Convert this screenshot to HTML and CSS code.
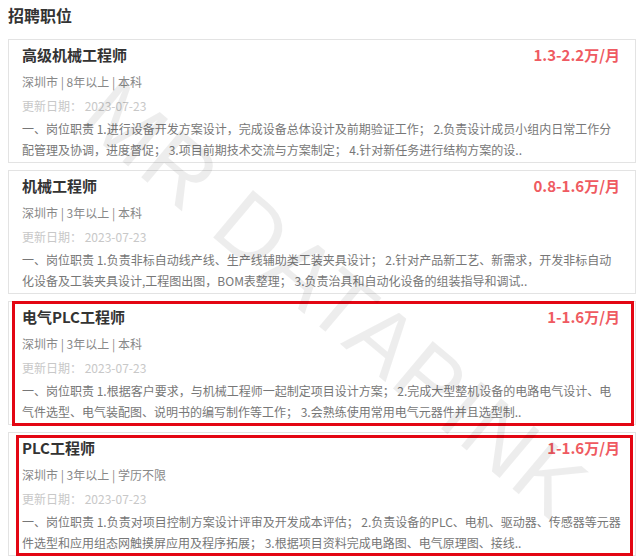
FILE: index.html
```html
<!DOCTYPE html>
<html lang="zh-CN">

<head>
    <meta charset="UTF-8">
    <meta name="viewport" content="width=device-width, initial-scale=1.0">
    <title>招聘职位</title>
    <link rel="stylesheet" href="styles.css">
</head>

<body>
    <div class="jobs">
        <h2 class="jobs-title">招聘职位</h2>

        <div class="job">
            <div class="job-head">
                <span class="job-name">高级机械工程师</span>
                <span class="job-salary">1.3-2.2万/月</span>
            </div>
            <div class="job-meta">深圳市 | 8年以上 | 本科</div>
            <div class="job-date">更新日期： 2023-07-23</div>
            <p class="job-desc">一、岗位职责 1.进行设备开发方案设计，完成设备总体设计及前期验证工作； 2.负责设计成员小组内日常工作分<br>配管理及协调，进度督促； 3.项目前期技术交流与方案制定； 4.针对新任务进行结构方案的设..</p>
        </div>

        <div class="job">
            <div class="job-head">
                <span class="job-name">机械工程师</span>
                <span class="job-salary">0.8-1.6万/月</span>
            </div>
            <div class="job-meta">深圳市 | 3年以上 | 本科</div>
            <div class="job-date">更新日期： 2023-07-23</div>
            <p class="job-desc">一、岗位职责 1.负责非标自动线产线、生产线辅助类工装夹具设计； 2.针对产品新工艺、新需求，开发非标自动<br>化设备及工装夹具设计,工程图出图，BOM表整理； 3.负责治具和自动化设备的组装指导和调试..</p>
        </div>

        <div class="job marked">
            <div class="job-head">
                <span class="job-name">电气PLC工程师</span>
                <span class="job-salary">1-1.6万/月</span>
            </div>
            <div class="job-meta">深圳市 | 3年以上 | 本科</div>
            <div class="job-date">更新日期： 2023-07-23</div>
            <p class="job-desc">一、岗位职责 1.根据客户要求，与机械工程师一起制定项目设计方案； 2.完成大型整机设备的电路电气设计、电<br>气件选型、电气装配图、说明书的编写制作等工作； 3.会熟练使用常用电气元器件并且选型制..</p>
        </div>

        <div class="job marked marked-inner">
            <div class="job-head">
                <span class="job-name">PLC工程师</span>
                <span class="job-salary">1-1.6万/月</span>
            </div>
            <div class="job-meta">深圳市 | 3年以上 | 学历不限</div>
            <div class="job-date">更新日期： 2023-07-23</div>
            <p class="job-desc">一、岗位职责 1.负责对项目控制方案设计评审及开发成本评估； 2.负责设备的PLC、电机、驱动器、传感器等元器<br>件选型和应用组态网触摸屏应用及程序拓展； 3.根据项目资料完成电路图、电气原理图、接线..</p>
        </div>

        <div class="watermark">MR DATAPINK</div>
    </div>
</body>

</html>
```

FILE: styles.css
```css
body {
    margin: 0;
    background: #fff;
    font-family: "Noto Sans CJK SC", "Noto Sans", sans-serif;
    color: #333;
}

.jobs {
    position: relative;
    width: 628px;
    padding: 0 0 0 8px;
    overflow: hidden;
    height: 560px;
}

.jobs-title {
    margin: 0;
    height: 32px;
    line-height: 30px;
    font-size: 16px;
    font-weight: bold;
    color: #333;
}

.job {
    position: relative;
    box-sizing: border-box;
    height: 124px;
    margin-top: 7px;
    padding: 2px 15px 0 13px;
    border: 1px solid #e3e3e3;
}

.job-head {
    display: flex;
    justify-content: space-between;
    align-items: center;
    height: 24px;
}

.job-name {
    font-size: 15px;
    font-weight: bold;
    color: #333;
}

.job-salary {
    font-size: 15px;
    font-weight: bold;
    color: #ef5a61;
}

.job-meta {
    margin-top: 4px;
    line-height: 24px;
    font-size: 12px;
    color: #888;
}

.job-date {
    line-height: 24px;
    font-size: 12px;
    color: #c8c8c8;
}

.job-desc {
    margin: 0;
    width: 610px;
    line-height: 21px;
    font-size: 12px;
    color: #777;
    height: 42px;
    overflow: hidden;
    white-space: nowrap;
}

/* red annotation boxes */
.marked::after {
    content: "";
    position: absolute;
    top: -1px;
    left: 3px;
    right: 1px;
    bottom: -2px;
    border: 3px solid #e30613;
    pointer-events: none;
}

.marked-inner::after {
    top: 2px;
    left: 7px;
    right: 2px;
    bottom: -1px;
}

.watermark {
    position: absolute;
    left: 335px;
    top: 300px;
    transform: translate(-50%, -50%) rotate(40deg);
    font-family: "Liberation Sans", sans-serif;
    font-weight: normal;
    font-size: 90px;
    letter-spacing: 2px;
    white-space: nowrap;
    color: rgba(0, 0, 0, 0.07);
    pointer-events: none;
}
```
